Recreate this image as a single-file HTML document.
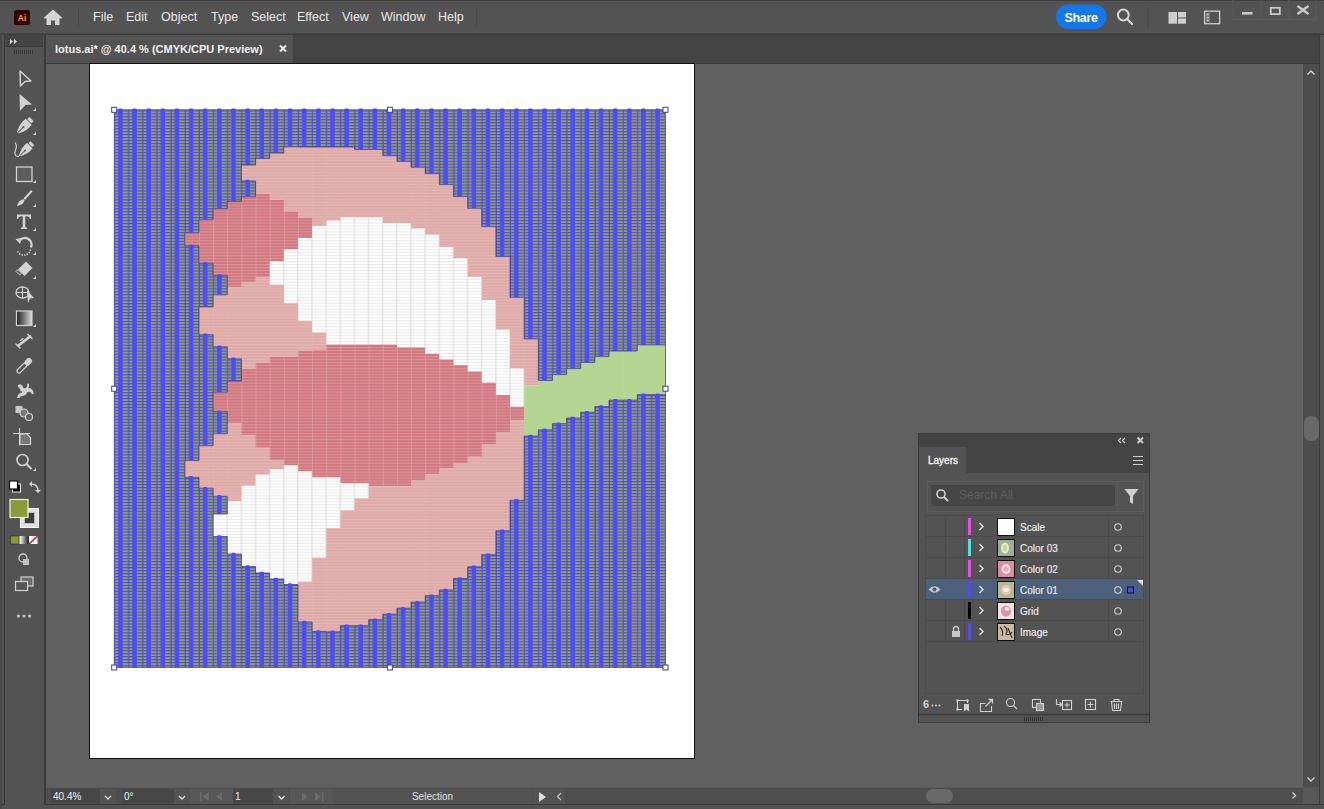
<!DOCTYPE html>
<html><head><meta charset="utf-8">
<style>
*{margin:0;padding:0;box-sizing:border-box}
html,body{width:1324px;height:809px;overflow:hidden;background:#535353;font-family:"Liberation Sans",sans-serif;}
.a{position:absolute}
#menubar{left:0;top:0;width:1324px;height:34px;background:#535353;border-top:1px solid #3d3d3d}
.menu{position:absolute;top:10px;font-size:12.5px;color:#e8e8e8;line-height:14px}
#tabbar{left:46px;top:34px;width:1274px;height:30px;background:#434343;border-top:1px solid #383838;border-bottom:1px solid #3a3a3a}
#tab{left:46px;top:34px;width:247px;height:30px;background:#535353;border-top:1px solid #383838;border-bottom:1px solid #3a3a3a}
#tabtxt{left:55px;top:42px;font-size:11px;font-weight:bold;color:#f0f0f0;line-height:14px}
#tabx{left:278px;top:42px;font-size:12px;font-weight:bold;color:#f0f0f0;line-height:14px}
#canvas{left:46px;top:64px;width:1257px;height:723px;background:#606060}
#artboard{left:89px;top:63px;width:606px;height:696px;background:#fff;border:1px solid #111}
#toolbar{left:4px;top:34px;width:42px;height:771px;background:#535353;border-left:1px solid #3a3a3a;border-right:2px solid #3a3a3a}
#tbhead{left:5px;top:34px;width:38px;height:13px;background:#454545;border-bottom:1px solid #3a3a3a}
#vscroll{left:1303px;top:64px;width:17px;height:723px;background:#4d4d4d;border-right:1px solid #444}
#vthumb{left:1304px;top:416px;width:15px;height:25px;background:#696969;border-radius:7px}
#status{left:46px;top:787px;width:1274px;height:17px;background:#4e4e4e;border-top:1px solid #5a5a5a}
#hthumb{left:926px;top:789px;width:27px;height:14px;background:#696969;border-radius:7px}
.fld{position:absolute;top:789px;height:15px;background:#474747;color:#f0f0f0;font-size:10px;line-height:16px;padding-left:2px}
.dd{position:absolute;top:789px;height:15px;width:16px;background:#535353}
#winborder{left:1320px;top:34px;width:4px;height:775px;background:#535353}
#botborder{left:0;top:804px;width:1324px;height:5px;background:#535353;border-top:1px solid #3a3a3a}
svg{position:absolute;left:0;top:0}
/* layers panel */
#panel{left:918px;top:433px;width:232px;height:290px;background:#535353;border:1px solid #3c3c3c}
#phead{left:919px;top:434px;width:230px;height:13px;background:#434343}
#ptabbar{left:919px;top:447px;width:230px;height:26px;background:#454545}
#ptab{left:919px;top:447px;width:47px;height:27px;background:#535353}
#ptabtxt{left:928px;top:454px;font-size:10px;color:#f8f8f8;line-height:13px;-webkit-text-stroke:0.3px #f8f8f8}
#search{left:931px;top:485px;width:184px;height:21px;background:#464646;border-radius:3px}
#searchtxt{left:959px;top:489px;font-size:12px;color:#5d5d5d;line-height:13px}
#list{left:925px;top:515px;width:219px;height:179px;border:1px solid #4c4c4c;background:#535353}
.row{position:absolute;left:926px;width:217px;height:21px;border-bottom:1px solid #4b4b4b}
.lname{position:absolute;left:1020px;font-size:10px;color:#eeeeee;line-height:13px;-webkit-text-stroke:0.15px #eee}
.bar{position:absolute;left:968px;width:3px;height:17px}
.thumb{position:absolute;left:997px;width:18px;height:18px;border:1px solid #111}
</style></head>
<body>
<div class="a" id="menubar"></div>
<div class="a" id="tabbar"></div>
<div class="a" id="tab"></div>
<div class="a" id="tabtxt">lotus.ai* @ 40.4 % (CMYK/CPU Preview)</div>
<div class="a" id="canvas"></div>
<div class="a" id="vscroll"></div>
<div class="a" id="vthumb"></div>
<div class="a" id="status"></div>
<div class="a" id="hthumb"></div>
<div class="a" id="winborder"></div>
<div class="a" style="left:1303px;top:787px;width:16px;height:17px;background:#585858"></div>
<div class="a" style="left:1319px;top:34px;width:1.3px;height:770px;background:#3c3c3c"></div>
<div class="a" style="left:1297px;top:64px;width:6px;height:723px;background:#626262"></div>
<div class="a" id="botborder"></div>
<div class="a" style="left:0;top:34px;width:1.5px;height:775px;background:#474747"></div>
<div class="a" id="toolbar"></div>
<div class="a" id="tbhead"></div>
<div class="a" id="artboard"></div>

<svg width="1324" height="809" viewBox="0 0 1324 809">
<defs>
<pattern id="pB" patternUnits="userSpaceOnUse" x="114.200" y="110.300" width="14.137" height="5.932">
<rect width="15" height="6" fill="#3c4072"/>
<rect x="0" y="1.15" width="15" height="2.1" fill="#9294d4"/>
<rect x="0" y="4.12" width="15" height="2.1" fill="#91a75e"/>
<rect x="0" y="0" width="15" height="0.28" fill="#91a75e"/>
<rect x="0" y="0" width="0.9" height="6" fill="#4a4ad0"/><rect x="13.9" y="0" width="0.3" height="6" fill="#4a4ad0"/>
<rect x="4.0" y="0" width="4.4" height="6" fill="#4b4bfd"/>
</pattern>
<pattern id="pP" patternUnits="userSpaceOnUse" x="114.200" y="109.800" width="14.137" height="2.966">
<rect width="15" height="3" fill="#dfaba9"/>
<rect x="0" y="0" width="15" height="0.7" fill="#e8bbb8"/>
</pattern>
<pattern id="pS" patternUnits="userSpaceOnUse" x="114.200" y="109.800" width="14.137" height="2.966">
<rect width="15" height="3" fill="#d27a82"/>
<rect x="0" y="0" width="15" height="0.7" fill="#e29da2"/>
<rect x="0" y="2.4" width="15" height="0.5" fill="#cc727a"/>
<rect x="0" y="0" width="0.6" height="3" fill="#e2a0a4"/>
</pattern>
<pattern id="pW" patternUnits="userSpaceOnUse" x="114.200" y="109.800" width="14.137" height="2.966">
<rect width="15" height="3" fill="#ffffff"/>
<rect x="0" y="0" width="15" height="0.8" fill="#e4e4e4"/>
<rect x="13.6" y="0" width="0.6" height="3" fill="#d4d4d4"/><rect x="0" y="0" width="0.3" height="3" fill="#d4d4d4"/>
</pattern>
</defs>
<rect x="114.20" y="109.80" width="14.737" height="557.70" fill="url(#pB)"/>
<rect x="128.34" y="109.80" width="14.737" height="557.70" fill="url(#pB)"/>
<rect x="142.47" y="109.80" width="14.737" height="557.70" fill="url(#pB)"/>
<rect x="156.61" y="109.80" width="14.737" height="557.70" fill="url(#pB)"/>
<rect x="170.75" y="109.80" width="14.737" height="557.70" fill="url(#pB)"/>
<rect x="184.88" y="109.80" width="14.737" height="122.90" fill="url(#pB)"/>
<rect x="184.88" y="232.70" width="14.737" height="13.00" fill="url(#pS)"/>
<rect x="184.88" y="245.70" width="14.737" height="214.80" fill="url(#pB)"/>
<rect x="184.88" y="460.50" width="14.737" height="16.80" fill="url(#pP)"/>
<rect x="184.88" y="477.30" width="14.737" height="190.20" fill="url(#pB)"/>
<rect x="199.02" y="109.80" width="14.737" height="109.90" fill="url(#pB)"/>
<rect x="199.02" y="219.70" width="14.737" height="43.60" fill="url(#pS)"/>
<rect x="199.02" y="263.30" width="14.737" height="43.60" fill="url(#pB)"/>
<rect x="199.02" y="306.90" width="14.737" height="27.80" fill="url(#pP)"/>
<rect x="199.02" y="334.70" width="14.737" height="111.00" fill="url(#pB)"/>
<rect x="199.02" y="445.70" width="14.737" height="42.50" fill="url(#pP)"/>
<rect x="199.02" y="488.20" width="14.737" height="179.30" fill="url(#pB)"/>
<rect x="213.16" y="109.80" width="14.737" height="98.80" fill="url(#pB)"/>
<rect x="213.16" y="208.60" width="14.737" height="66.80" fill="url(#pS)"/>
<rect x="213.16" y="275.40" width="14.737" height="19.40" fill="url(#pB)"/>
<rect x="213.16" y="294.80" width="14.737" height="52.00" fill="url(#pP)"/>
<rect x="213.16" y="346.80" width="14.737" height="45.40" fill="url(#pB)"/>
<rect x="213.16" y="392.20" width="14.737" height="19.40" fill="url(#pS)"/>
<rect x="213.16" y="411.60" width="14.737" height="22.10" fill="url(#pB)"/>
<rect x="213.16" y="433.70" width="14.737" height="62.60" fill="url(#pP)"/>
<rect x="213.16" y="496.30" width="14.737" height="17.70" fill="url(#pB)"/>
<rect x="213.16" y="514.00" width="14.737" height="22.50" fill="url(#pW)"/>
<rect x="213.16" y="536.50" width="14.737" height="131.00" fill="url(#pB)"/>
<rect x="227.30" y="109.80" width="14.737" height="91.70" fill="url(#pB)"/>
<rect x="227.30" y="201.50" width="14.737" height="85.90" fill="url(#pS)"/>
<rect x="227.30" y="287.40" width="14.737" height="71.40" fill="url(#pP)"/>
<rect x="227.30" y="358.80" width="14.737" height="22.20" fill="url(#pB)"/>
<rect x="227.30" y="381.00" width="14.737" height="42.60" fill="url(#pS)"/>
<rect x="227.30" y="423.60" width="14.737" height="77.40" fill="url(#pP)"/>
<rect x="227.30" y="501.00" width="14.737" height="53.00" fill="url(#pW)"/>
<rect x="227.30" y="554.00" width="14.737" height="113.50" fill="url(#pB)"/>
<rect x="241.43" y="109.80" width="14.737" height="55.20" fill="url(#pB)"/>
<rect x="241.43" y="165.00" width="14.737" height="16.00" fill="url(#pP)"/>
<rect x="241.43" y="181.00" width="14.737" height="15.60" fill="url(#pB)"/>
<rect x="241.43" y="196.60" width="14.737" height="85.30" fill="url(#pS)"/>
<rect x="241.43" y="281.90" width="14.737" height="87.10" fill="url(#pP)"/>
<rect x="241.43" y="369.00" width="14.737" height="66.50" fill="url(#pS)"/>
<rect x="241.43" y="435.50" width="14.737" height="50.30" fill="url(#pP)"/>
<rect x="241.43" y="485.80" width="14.737" height="80.70" fill="url(#pW)"/>
<rect x="241.43" y="566.50" width="14.737" height="101.00" fill="url(#pB)"/>
<rect x="255.57" y="109.80" width="14.737" height="48.70" fill="url(#pB)"/>
<rect x="255.57" y="158.50" width="14.737" height="35.30" fill="url(#pP)"/>
<rect x="255.57" y="193.80" width="14.737" height="83.40" fill="url(#pS)"/>
<rect x="255.57" y="277.20" width="14.737" height="85.30" fill="url(#pP)"/>
<rect x="255.57" y="362.50" width="14.737" height="85.30" fill="url(#pS)"/>
<rect x="255.57" y="447.80" width="14.737" height="26.90" fill="url(#pP)"/>
<rect x="255.57" y="474.70" width="14.737" height="98.30" fill="url(#pW)"/>
<rect x="255.57" y="573.00" width="14.737" height="94.50" fill="url(#pB)"/>
<rect x="269.71" y="109.80" width="14.737" height="43.20" fill="url(#pB)"/>
<rect x="269.71" y="153.00" width="14.737" height="46.70" fill="url(#pP)"/>
<rect x="269.71" y="199.70" width="14.737" height="61.80" fill="url(#pS)"/>
<rect x="269.71" y="261.50" width="14.737" height="23.10" fill="url(#pW)"/>
<rect x="269.71" y="284.60" width="14.737" height="72.40" fill="url(#pP)"/>
<rect x="269.71" y="357.00" width="14.737" height="102.90" fill="url(#pS)"/>
<rect x="269.71" y="459.90" width="14.737" height="9.20" fill="url(#pP)"/>
<rect x="269.71" y="469.10" width="14.737" height="109.90" fill="url(#pW)"/>
<rect x="269.71" y="579.00" width="14.737" height="88.50" fill="url(#pB)"/>
<rect x="283.84" y="109.80" width="14.737" height="37.00" fill="url(#pB)"/>
<rect x="283.84" y="146.80" width="14.737" height="64.60" fill="url(#pP)"/>
<rect x="283.84" y="211.40" width="14.737" height="38.00" fill="url(#pS)"/>
<rect x="283.84" y="249.40" width="14.737" height="53.80" fill="url(#pW)"/>
<rect x="283.84" y="303.20" width="14.737" height="53.80" fill="url(#pP)"/>
<rect x="283.84" y="357.00" width="14.737" height="108.40" fill="url(#pS)"/>
<rect x="283.84" y="465.40" width="14.737" height="119.10" fill="url(#pW)"/>
<rect x="283.84" y="584.50" width="14.737" height="83.00" fill="url(#pB)"/>
<rect x="297.98" y="109.80" width="14.737" height="37.20" fill="url(#pB)"/>
<rect x="297.98" y="147.00" width="14.737" height="70.50" fill="url(#pP)"/>
<rect x="297.98" y="217.50" width="14.737" height="20.50" fill="url(#pS)"/>
<rect x="297.98" y="238.00" width="14.737" height="82.70" fill="url(#pW)"/>
<rect x="297.98" y="320.70" width="14.737" height="29.80" fill="url(#pP)"/>
<rect x="297.98" y="350.50" width="14.737" height="120.90" fill="url(#pS)"/>
<rect x="297.98" y="471.40" width="14.737" height="110.30" fill="url(#pW)"/>
<rect x="297.98" y="581.70" width="14.737" height="40.30" fill="url(#pP)"/>
<rect x="297.98" y="622.00" width="14.737" height="45.50" fill="url(#pB)"/>
<rect x="312.12" y="109.80" width="14.737" height="37.20" fill="url(#pB)"/>
<rect x="312.12" y="147.00" width="14.737" height="79.20" fill="url(#pP)"/>
<rect x="312.12" y="226.20" width="14.737" height="106.30" fill="url(#pW)"/>
<rect x="312.12" y="332.50" width="14.737" height="17.60" fill="url(#pP)"/>
<rect x="312.12" y="350.10" width="14.737" height="127.40" fill="url(#pS)"/>
<rect x="312.12" y="477.50" width="14.737" height="80.10" fill="url(#pW)"/>
<rect x="312.12" y="557.60" width="14.737" height="73.90" fill="url(#pP)"/>
<rect x="312.12" y="631.50" width="14.737" height="36.00" fill="url(#pB)"/>
<rect x="326.25" y="109.80" width="14.737" height="37.20" fill="url(#pB)"/>
<rect x="326.25" y="147.00" width="14.737" height="73.70" fill="url(#pP)"/>
<rect x="326.25" y="220.70" width="14.737" height="123.90" fill="url(#pW)"/>
<rect x="326.25" y="344.60" width="14.737" height="132.90" fill="url(#pS)"/>
<rect x="326.25" y="477.50" width="14.737" height="50.50" fill="url(#pW)"/>
<rect x="326.25" y="528.00" width="14.737" height="103.80" fill="url(#pP)"/>
<rect x="326.25" y="631.80" width="14.737" height="35.70" fill="url(#pB)"/>
<rect x="340.39" y="109.80" width="14.737" height="37.20" fill="url(#pB)"/>
<rect x="340.39" y="147.00" width="14.737" height="70.50" fill="url(#pP)"/>
<rect x="340.39" y="217.50" width="14.737" height="127.10" fill="url(#pW)"/>
<rect x="340.39" y="344.60" width="14.737" height="138.80" fill="url(#pS)"/>
<rect x="340.39" y="483.40" width="14.737" height="26.90" fill="url(#pW)"/>
<rect x="340.39" y="510.30" width="14.737" height="115.40" fill="url(#pP)"/>
<rect x="340.39" y="625.70" width="14.737" height="41.80" fill="url(#pB)"/>
<rect x="354.53" y="109.80" width="14.737" height="39.70" fill="url(#pB)"/>
<rect x="354.53" y="149.50" width="14.737" height="68.00" fill="url(#pP)"/>
<rect x="354.53" y="217.50" width="14.737" height="127.10" fill="url(#pW)"/>
<rect x="354.53" y="344.60" width="14.737" height="138.80" fill="url(#pS)"/>
<rect x="354.53" y="483.40" width="14.737" height="14.90" fill="url(#pW)"/>
<rect x="354.53" y="498.30" width="14.737" height="127.40" fill="url(#pP)"/>
<rect x="354.53" y="625.70" width="14.737" height="41.80" fill="url(#pB)"/>
<rect x="368.67" y="109.80" width="14.737" height="39.70" fill="url(#pB)"/>
<rect x="368.67" y="149.50" width="14.737" height="68.00" fill="url(#pP)"/>
<rect x="368.67" y="217.50" width="14.737" height="127.10" fill="url(#pW)"/>
<rect x="368.67" y="344.60" width="14.737" height="141.60" fill="url(#pS)"/>
<rect x="368.67" y="486.20" width="14.737" height="133.50" fill="url(#pP)"/>
<rect x="368.67" y="619.70" width="14.737" height="47.80" fill="url(#pB)"/>
<rect x="382.80" y="109.80" width="14.737" height="45.90" fill="url(#pB)"/>
<rect x="382.80" y="155.70" width="14.737" height="67.30" fill="url(#pP)"/>
<rect x="382.80" y="223.00" width="14.737" height="121.60" fill="url(#pW)"/>
<rect x="382.80" y="344.60" width="14.737" height="141.60" fill="url(#pS)"/>
<rect x="382.80" y="486.20" width="14.737" height="128.00" fill="url(#pP)"/>
<rect x="382.80" y="614.20" width="14.737" height="53.30" fill="url(#pB)"/>
<rect x="396.94" y="109.80" width="14.737" height="51.60" fill="url(#pB)"/>
<rect x="396.94" y="161.40" width="14.737" height="61.60" fill="url(#pP)"/>
<rect x="396.94" y="223.00" width="14.737" height="124.30" fill="url(#pW)"/>
<rect x="396.94" y="347.30" width="14.737" height="138.90" fill="url(#pS)"/>
<rect x="396.94" y="486.20" width="14.737" height="122.00" fill="url(#pP)"/>
<rect x="396.94" y="608.20" width="14.737" height="59.30" fill="url(#pB)"/>
<rect x="411.08" y="109.80" width="14.737" height="57.50" fill="url(#pB)"/>
<rect x="411.08" y="167.30" width="14.737" height="61.30" fill="url(#pP)"/>
<rect x="411.08" y="228.60" width="14.737" height="118.70" fill="url(#pW)"/>
<rect x="411.08" y="347.30" width="14.737" height="133.40" fill="url(#pS)"/>
<rect x="411.08" y="480.70" width="14.737" height="121.40" fill="url(#pP)"/>
<rect x="411.08" y="602.10" width="14.737" height="65.40" fill="url(#pB)"/>
<rect x="425.21" y="109.80" width="14.737" height="63.90" fill="url(#pB)"/>
<rect x="425.21" y="173.70" width="14.737" height="61.10" fill="url(#pP)"/>
<rect x="425.21" y="234.80" width="14.737" height="119.00" fill="url(#pW)"/>
<rect x="425.21" y="353.80" width="14.737" height="120.40" fill="url(#pS)"/>
<rect x="425.21" y="474.20" width="14.737" height="121.40" fill="url(#pP)"/>
<rect x="425.21" y="595.60" width="14.737" height="71.90" fill="url(#pB)"/>
<rect x="439.35" y="109.80" width="14.737" height="74.80" fill="url(#pB)"/>
<rect x="439.35" y="184.60" width="14.737" height="62.40" fill="url(#pP)"/>
<rect x="439.35" y="247.00" width="14.737" height="112.40" fill="url(#pW)"/>
<rect x="439.35" y="359.40" width="14.737" height="109.20" fill="url(#pS)"/>
<rect x="439.35" y="468.60" width="14.737" height="121.40" fill="url(#pP)"/>
<rect x="439.35" y="590.00" width="14.737" height="77.50" fill="url(#pB)"/>
<rect x="453.49" y="109.80" width="14.737" height="86.70" fill="url(#pB)"/>
<rect x="453.49" y="196.50" width="14.737" height="62.00" fill="url(#pP)"/>
<rect x="453.49" y="258.50" width="14.737" height="106.50" fill="url(#pW)"/>
<rect x="453.49" y="365.00" width="14.737" height="98.00" fill="url(#pS)"/>
<rect x="453.49" y="463.00" width="14.737" height="115.50" fill="url(#pP)"/>
<rect x="453.49" y="578.50" width="14.737" height="89.00" fill="url(#pB)"/>
<rect x="467.62" y="109.80" width="14.737" height="98.50" fill="url(#pB)"/>
<rect x="467.62" y="208.30" width="14.737" height="68.60" fill="url(#pP)"/>
<rect x="467.62" y="276.90" width="14.737" height="94.60" fill="url(#pW)"/>
<rect x="467.62" y="371.50" width="14.737" height="85.30" fill="url(#pS)"/>
<rect x="467.62" y="456.80" width="14.737" height="110.00" fill="url(#pP)"/>
<rect x="467.62" y="566.80" width="14.737" height="100.70" fill="url(#pB)"/>
<rect x="481.76" y="109.80" width="14.737" height="116.80" fill="url(#pB)"/>
<rect x="481.76" y="226.60" width="14.737" height="73.40" fill="url(#pP)"/>
<rect x="481.76" y="300.00" width="14.737" height="82.60" fill="url(#pW)"/>
<rect x="481.76" y="382.60" width="14.737" height="62.10" fill="url(#pS)"/>
<rect x="481.76" y="444.70" width="14.737" height="110.00" fill="url(#pP)"/>
<rect x="481.76" y="554.70" width="14.737" height="112.80" fill="url(#pB)"/>
<rect x="495.90" y="109.80" width="14.737" height="146.70" fill="url(#pB)"/>
<rect x="495.90" y="256.50" width="14.737" height="73.20" fill="url(#pP)"/>
<rect x="495.90" y="329.70" width="14.737" height="65.30" fill="url(#pW)"/>
<rect x="495.90" y="395.00" width="14.737" height="37.60" fill="url(#pS)"/>
<rect x="495.90" y="432.60" width="14.737" height="98.20" fill="url(#pP)"/>
<rect x="495.90" y="530.80" width="14.737" height="136.70" fill="url(#pB)"/>
<rect x="510.04" y="109.80" width="14.737" height="187.50" fill="url(#pB)"/>
<rect x="510.04" y="297.30" width="14.737" height="71.30" fill="url(#pP)"/>
<rect x="510.04" y="368.60" width="14.737" height="38.10" fill="url(#pW)"/>
<rect x="510.04" y="406.70" width="14.737" height="13.90" fill="url(#pS)"/>
<rect x="510.04" y="420.60" width="14.737" height="79.70" fill="url(#pP)"/>
<rect x="510.04" y="500.30" width="14.737" height="167.20" fill="url(#pB)"/>
<rect x="524.17" y="109.80" width="14.737" height="229.10" fill="url(#pB)"/>
<rect x="524.17" y="338.90" width="14.737" height="46.40" fill="url(#pP)"/>
<rect x="524.17" y="385.30" width="14.737" height="50.70" fill="#b4d692"/>
<rect x="524.17" y="436.00" width="14.737" height="231.50" fill="url(#pB)"/>
<rect x="538.31" y="109.80" width="14.737" height="270.70" fill="url(#pB)"/>
<rect x="538.31" y="380.50" width="14.737" height="49.30" fill="#b4d692"/>
<rect x="538.31" y="429.80" width="14.737" height="237.70" fill="url(#pB)"/>
<rect x="552.45" y="109.80" width="14.737" height="264.80" fill="url(#pB)"/>
<rect x="552.45" y="374.60" width="14.737" height="49.00" fill="#b4d692"/>
<rect x="552.45" y="423.60" width="14.737" height="243.90" fill="url(#pB)"/>
<rect x="566.58" y="109.80" width="14.737" height="258.80" fill="url(#pB)"/>
<rect x="566.58" y="368.60" width="14.737" height="49.40" fill="#b4d692"/>
<rect x="566.58" y="418.00" width="14.737" height="249.50" fill="url(#pB)"/>
<rect x="580.72" y="109.80" width="14.737" height="252.70" fill="url(#pB)"/>
<rect x="580.72" y="362.50" width="14.737" height="49.70" fill="#b4d692"/>
<rect x="580.72" y="412.20" width="14.737" height="255.30" fill="url(#pB)"/>
<rect x="594.86" y="109.80" width="14.737" height="246.80" fill="url(#pB)"/>
<rect x="594.86" y="356.60" width="14.737" height="49.90" fill="#b4d692"/>
<rect x="594.86" y="406.50" width="14.737" height="261.00" fill="url(#pB)"/>
<rect x="609.00" y="109.80" width="14.737" height="241.20" fill="url(#pB)"/>
<rect x="609.00" y="351.00" width="14.737" height="49.10" fill="#b4d692"/>
<rect x="609.00" y="400.10" width="14.737" height="267.40" fill="url(#pB)"/>
<rect x="623.13" y="109.80" width="14.737" height="241.20" fill="url(#pB)"/>
<rect x="623.13" y="351.00" width="14.737" height="49.10" fill="#b4d692"/>
<rect x="623.13" y="400.10" width="14.737" height="267.40" fill="url(#pB)"/>
<rect x="637.27" y="109.80" width="14.737" height="235.10" fill="url(#pB)"/>
<rect x="637.27" y="344.90" width="14.737" height="49.70" fill="#b4d692"/>
<rect x="637.27" y="394.60" width="14.737" height="272.90" fill="url(#pB)"/>
<rect x="651.41" y="109.80" width="14.137" height="235.10" fill="url(#pB)"/>
<rect x="651.41" y="344.90" width="14.137" height="49.70" fill="#b4d692"/>
<rect x="651.41" y="394.60" width="14.137" height="272.90" fill="url(#pB)"/>
<path d="M184.88 232.70V245.70M184.88 460.50V477.30M184.88 232.70H199.02M199.02 219.70V232.70M184.88 245.70H199.02M184.88 460.50H199.02M199.02 245.70V263.30M199.02 306.90V334.70M199.02 445.70V460.50M184.88 477.30H199.02M199.02 477.30V488.20M199.02 219.70H213.16M213.16 208.60V219.70M199.02 263.30H213.16M199.02 306.90H213.16M213.16 263.30V275.40M213.16 294.80V306.90M199.02 334.70H213.16M199.02 445.70H213.16M213.16 334.70V346.80M213.16 392.20V411.60M213.16 433.70V445.70M199.02 488.20H213.16M213.16 488.20V496.30M213.16 514.00V536.50M213.16 208.60H227.30M227.30 201.50V208.60M213.16 275.40H227.30M213.16 294.80H227.30M227.30 275.40V294.80M213.16 346.80H227.30M213.16 392.20H227.30M227.30 346.80V358.80M227.30 381.00V392.20M213.16 411.60H227.30M213.16 433.70H227.30M227.30 411.60V433.70M213.16 496.30H227.30M213.16 514.00H227.30M227.30 496.30V514.00M213.16 536.50H227.30M227.30 536.50V554.00M227.30 201.50H241.43M241.43 165.00V181.00M241.43 196.60V201.50M227.30 358.80H241.43M227.30 381.00H241.43M241.43 358.80V381.00M227.30 554.00H241.43M241.43 554.00V566.50M241.43 165.00H255.57M255.57 158.50V165.00M241.43 181.00H255.57M241.43 196.60H255.57M255.57 181.00V196.60M241.43 566.50H255.57M255.57 566.50V573.00M255.57 158.50H269.71M269.71 153.00V158.50M255.57 573.00H269.71M269.71 573.00V579.00M269.71 153.00H283.84M283.84 146.80V153.00M269.71 579.00H283.84M283.84 579.00V584.50M283.84 146.80H297.98M283.84 584.50H297.98M297.98 584.50V622.00M297.98 147.00H312.12M297.98 622.00H312.12M312.12 622.00V631.50M312.12 147.00H326.25M312.12 631.50H326.25M326.25 147.00H340.39M326.25 631.80H340.39M340.39 147.00H354.53M340.39 625.70H354.53M340.39 625.70V631.80M354.53 149.50H368.67M354.53 147.00V149.50M354.53 625.70H368.67M368.67 149.50H382.80M368.67 619.70H382.80M368.67 619.70V625.70M382.80 155.70H396.94M382.80 149.50V155.70M382.80 614.20H396.94M382.80 614.20V619.70M396.94 161.40H411.08M396.94 155.70V161.40M396.94 608.20H411.08M396.94 608.20V614.20M411.08 167.30H425.21M411.08 161.40V167.30M411.08 602.10H425.21M411.08 602.10V608.20M425.21 173.70H439.35M425.21 167.30V173.70M425.21 595.60H439.35M425.21 595.60V602.10M439.35 184.60H453.49M439.35 173.70V184.60M439.35 590.00H453.49M439.35 590.00V595.60M453.49 196.50H467.62M453.49 184.60V196.50M453.49 578.50H467.62M453.49 578.50V590.00M467.62 208.30H481.76M467.62 196.50V208.30M467.62 566.80H481.76M467.62 566.80V578.50M481.76 226.60H495.90M481.76 208.30V226.60M481.76 554.70H495.90M481.76 554.70V566.80M495.90 256.50H510.04M495.90 226.60V256.50M495.90 530.80H510.04M495.90 530.80V554.70M510.04 297.30H524.17M510.04 256.50V297.30M510.04 500.30H524.17M510.04 500.30V530.80M524.17 338.90H538.31M524.17 297.30V338.90M524.17 436.00H538.31M524.17 436.00V500.30M538.31 380.50H552.45M538.31 338.90V380.50M552.45 374.60V380.50M538.31 429.80H552.45M538.31 429.80V436.00M552.45 374.60H566.58M566.58 368.60V374.60M552.45 423.60H566.58M552.45 423.60V429.80M566.58 368.60H580.72M580.72 362.50V368.60M566.58 418.00H580.72M566.58 418.00V423.60M580.72 362.50H594.86M594.86 356.60V362.50M580.72 412.20H594.86M580.72 412.20V418.00M594.86 356.60H609.00M609.00 351.00V356.60M594.86 406.50H609.00M594.86 406.50V412.20M609.00 351.00H623.13M609.00 400.10H623.13M609.00 400.10V406.50M623.13 351.00H637.27M637.27 344.90V351.00M623.13 400.10H637.27M637.27 344.90H651.41M637.27 394.60H651.41M637.27 394.60V400.10M651.41 344.90H665.54M651.41 394.60H665.54" fill="none" stroke="#3c3c86" stroke-width="0.75"/>
<rect x="118.20" y="108.60" width="4.4" height="3.2" rx="1.3" fill="#4b4bfd"/>
<rect x="118.30" y="110.20" width="4.2" height="3" fill="#4b4bfd"/>
<rect x="132.34" y="108.60" width="4.4" height="3.2" rx="1.3" fill="#4b4bfd"/>
<rect x="132.44" y="110.20" width="4.2" height="3" fill="#4b4bfd"/>
<rect x="146.47" y="108.60" width="4.4" height="3.2" rx="1.3" fill="#4b4bfd"/>
<rect x="146.57" y="110.20" width="4.2" height="3" fill="#4b4bfd"/>
<rect x="160.61" y="108.60" width="4.4" height="3.2" rx="1.3" fill="#4b4bfd"/>
<rect x="160.71" y="110.20" width="4.2" height="3" fill="#4b4bfd"/>
<rect x="174.75" y="108.60" width="4.4" height="3.2" rx="1.3" fill="#4b4bfd"/>
<rect x="174.85" y="110.20" width="4.2" height="3" fill="#4b4bfd"/>
<rect x="188.88" y="108.60" width="4.4" height="3.2" rx="1.3" fill="#4b4bfd"/>
<rect x="188.98" y="110.20" width="4.2" height="3" fill="#4b4bfd"/>
<rect x="188.88" y="244.50" width="4.4" height="3.2" rx="1.3" fill="#4b4bfd"/>
<rect x="188.98" y="246.10" width="4.2" height="3" fill="#4b4bfd"/>
<rect x="188.88" y="476.10" width="4.4" height="3.2" rx="1.3" fill="#4b4bfd"/>
<rect x="188.98" y="477.70" width="4.2" height="3" fill="#4b4bfd"/>
<rect x="203.02" y="108.60" width="4.4" height="3.2" rx="1.3" fill="#4b4bfd"/>
<rect x="203.12" y="110.20" width="4.2" height="3" fill="#4b4bfd"/>
<rect x="203.02" y="262.10" width="4.4" height="3.2" rx="1.3" fill="#4b4bfd"/>
<rect x="203.12" y="263.70" width="4.2" height="3" fill="#4b4bfd"/>
<rect x="203.02" y="333.50" width="4.4" height="3.2" rx="1.3" fill="#4b4bfd"/>
<rect x="203.12" y="335.10" width="4.2" height="3" fill="#4b4bfd"/>
<rect x="203.02" y="487.00" width="4.4" height="3.2" rx="1.3" fill="#4b4bfd"/>
<rect x="203.12" y="488.60" width="4.2" height="3" fill="#4b4bfd"/>
<rect x="217.16" y="108.60" width="4.4" height="3.2" rx="1.3" fill="#4b4bfd"/>
<rect x="217.26" y="110.20" width="4.2" height="3" fill="#4b4bfd"/>
<rect x="217.16" y="274.20" width="4.4" height="3.2" rx="1.3" fill="#4b4bfd"/>
<rect x="217.26" y="275.80" width="4.2" height="3" fill="#4b4bfd"/>
<rect x="217.16" y="345.60" width="4.4" height="3.2" rx="1.3" fill="#4b4bfd"/>
<rect x="217.26" y="347.20" width="4.2" height="3" fill="#4b4bfd"/>
<rect x="217.16" y="410.40" width="4.4" height="3.2" rx="1.3" fill="#4b4bfd"/>
<rect x="217.26" y="412.00" width="4.2" height="3" fill="#4b4bfd"/>
<rect x="217.16" y="495.10" width="4.4" height="3.2" rx="1.3" fill="#4b4bfd"/>
<rect x="217.26" y="496.70" width="4.2" height="3" fill="#4b4bfd"/>
<rect x="217.16" y="535.30" width="4.4" height="3.2" rx="1.3" fill="#4b4bfd"/>
<rect x="217.26" y="536.90" width="4.2" height="3" fill="#4b4bfd"/>
<rect x="231.30" y="108.60" width="4.4" height="3.2" rx="1.3" fill="#4b4bfd"/>
<rect x="231.40" y="110.20" width="4.2" height="3" fill="#4b4bfd"/>
<rect x="231.30" y="357.60" width="4.4" height="3.2" rx="1.3" fill="#4b4bfd"/>
<rect x="231.40" y="359.20" width="4.2" height="3" fill="#4b4bfd"/>
<rect x="231.30" y="552.80" width="4.4" height="3.2" rx="1.3" fill="#4b4bfd"/>
<rect x="231.40" y="554.40" width="4.2" height="3" fill="#4b4bfd"/>
<rect x="245.43" y="108.60" width="4.4" height="3.2" rx="1.3" fill="#4b4bfd"/>
<rect x="245.53" y="110.20" width="4.2" height="3" fill="#4b4bfd"/>
<rect x="245.43" y="179.80" width="4.4" height="3.2" rx="1.3" fill="#4b4bfd"/>
<rect x="245.53" y="181.40" width="4.2" height="3" fill="#4b4bfd"/>
<rect x="245.43" y="565.30" width="4.4" height="3.2" rx="1.3" fill="#4b4bfd"/>
<rect x="245.53" y="566.90" width="4.2" height="3" fill="#4b4bfd"/>
<rect x="259.57" y="108.60" width="4.4" height="3.2" rx="1.3" fill="#4b4bfd"/>
<rect x="259.67" y="110.20" width="4.2" height="3" fill="#4b4bfd"/>
<rect x="259.57" y="571.80" width="4.4" height="3.2" rx="1.3" fill="#4b4bfd"/>
<rect x="259.67" y="573.40" width="4.2" height="3" fill="#4b4bfd"/>
<rect x="273.71" y="108.60" width="4.4" height="3.2" rx="1.3" fill="#4b4bfd"/>
<rect x="273.81" y="110.20" width="4.2" height="3" fill="#4b4bfd"/>
<rect x="273.71" y="577.80" width="4.4" height="3.2" rx="1.3" fill="#4b4bfd"/>
<rect x="273.81" y="579.40" width="4.2" height="3" fill="#4b4bfd"/>
<rect x="287.84" y="108.60" width="4.4" height="3.2" rx="1.3" fill="#4b4bfd"/>
<rect x="287.94" y="110.20" width="4.2" height="3" fill="#4b4bfd"/>
<rect x="287.84" y="583.30" width="4.4" height="3.2" rx="1.3" fill="#4b4bfd"/>
<rect x="287.94" y="584.90" width="4.2" height="3" fill="#4b4bfd"/>
<rect x="301.98" y="108.60" width="4.4" height="3.2" rx="1.3" fill="#4b4bfd"/>
<rect x="302.08" y="110.20" width="4.2" height="3" fill="#4b4bfd"/>
<rect x="301.98" y="620.80" width="4.4" height="3.2" rx="1.3" fill="#4b4bfd"/>
<rect x="302.08" y="622.40" width="4.2" height="3" fill="#4b4bfd"/>
<rect x="316.12" y="108.60" width="4.4" height="3.2" rx="1.3" fill="#4b4bfd"/>
<rect x="316.22" y="110.20" width="4.2" height="3" fill="#4b4bfd"/>
<rect x="316.12" y="630.30" width="4.4" height="3.2" rx="1.3" fill="#4b4bfd"/>
<rect x="316.22" y="631.90" width="4.2" height="3" fill="#4b4bfd"/>
<rect x="330.25" y="108.60" width="4.4" height="3.2" rx="1.3" fill="#4b4bfd"/>
<rect x="330.36" y="110.20" width="4.2" height="3" fill="#4b4bfd"/>
<rect x="330.25" y="630.60" width="4.4" height="3.2" rx="1.3" fill="#4b4bfd"/>
<rect x="330.36" y="632.20" width="4.2" height="3" fill="#4b4bfd"/>
<rect x="344.39" y="108.60" width="4.4" height="3.2" rx="1.3" fill="#4b4bfd"/>
<rect x="344.49" y="110.20" width="4.2" height="3" fill="#4b4bfd"/>
<rect x="344.39" y="624.50" width="4.4" height="3.2" rx="1.3" fill="#4b4bfd"/>
<rect x="344.49" y="626.10" width="4.2" height="3" fill="#4b4bfd"/>
<rect x="358.53" y="108.60" width="4.4" height="3.2" rx="1.3" fill="#4b4bfd"/>
<rect x="358.63" y="110.20" width="4.2" height="3" fill="#4b4bfd"/>
<rect x="358.53" y="624.50" width="4.4" height="3.2" rx="1.3" fill="#4b4bfd"/>
<rect x="358.63" y="626.10" width="4.2" height="3" fill="#4b4bfd"/>
<rect x="372.67" y="108.60" width="4.4" height="3.2" rx="1.3" fill="#4b4bfd"/>
<rect x="372.77" y="110.20" width="4.2" height="3" fill="#4b4bfd"/>
<rect x="372.67" y="618.50" width="4.4" height="3.2" rx="1.3" fill="#4b4bfd"/>
<rect x="372.77" y="620.10" width="4.2" height="3" fill="#4b4bfd"/>
<rect x="386.80" y="108.60" width="4.4" height="3.2" rx="1.3" fill="#4b4bfd"/>
<rect x="386.90" y="110.20" width="4.2" height="3" fill="#4b4bfd"/>
<rect x="386.80" y="613.00" width="4.4" height="3.2" rx="1.3" fill="#4b4bfd"/>
<rect x="386.90" y="614.60" width="4.2" height="3" fill="#4b4bfd"/>
<rect x="400.94" y="108.60" width="4.4" height="3.2" rx="1.3" fill="#4b4bfd"/>
<rect x="401.04" y="110.20" width="4.2" height="3" fill="#4b4bfd"/>
<rect x="400.94" y="607.00" width="4.4" height="3.2" rx="1.3" fill="#4b4bfd"/>
<rect x="401.04" y="608.60" width="4.2" height="3" fill="#4b4bfd"/>
<rect x="415.08" y="108.60" width="4.4" height="3.2" rx="1.3" fill="#4b4bfd"/>
<rect x="415.18" y="110.20" width="4.2" height="3" fill="#4b4bfd"/>
<rect x="415.08" y="600.90" width="4.4" height="3.2" rx="1.3" fill="#4b4bfd"/>
<rect x="415.18" y="602.50" width="4.2" height="3" fill="#4b4bfd"/>
<rect x="429.21" y="108.60" width="4.4" height="3.2" rx="1.3" fill="#4b4bfd"/>
<rect x="429.31" y="110.20" width="4.2" height="3" fill="#4b4bfd"/>
<rect x="429.21" y="594.40" width="4.4" height="3.2" rx="1.3" fill="#4b4bfd"/>
<rect x="429.31" y="596.00" width="4.2" height="3" fill="#4b4bfd"/>
<rect x="443.35" y="108.60" width="4.4" height="3.2" rx="1.3" fill="#4b4bfd"/>
<rect x="443.45" y="110.20" width="4.2" height="3" fill="#4b4bfd"/>
<rect x="443.35" y="588.80" width="4.4" height="3.2" rx="1.3" fill="#4b4bfd"/>
<rect x="443.45" y="590.40" width="4.2" height="3" fill="#4b4bfd"/>
<rect x="457.49" y="108.60" width="4.4" height="3.2" rx="1.3" fill="#4b4bfd"/>
<rect x="457.59" y="110.20" width="4.2" height="3" fill="#4b4bfd"/>
<rect x="457.49" y="577.30" width="4.4" height="3.2" rx="1.3" fill="#4b4bfd"/>
<rect x="457.59" y="578.90" width="4.2" height="3" fill="#4b4bfd"/>
<rect x="471.62" y="108.60" width="4.4" height="3.2" rx="1.3" fill="#4b4bfd"/>
<rect x="471.73" y="110.20" width="4.2" height="3" fill="#4b4bfd"/>
<rect x="471.62" y="565.60" width="4.4" height="3.2" rx="1.3" fill="#4b4bfd"/>
<rect x="471.73" y="567.20" width="4.2" height="3" fill="#4b4bfd"/>
<rect x="485.76" y="108.60" width="4.4" height="3.2" rx="1.3" fill="#4b4bfd"/>
<rect x="485.86" y="110.20" width="4.2" height="3" fill="#4b4bfd"/>
<rect x="485.76" y="553.50" width="4.4" height="3.2" rx="1.3" fill="#4b4bfd"/>
<rect x="485.86" y="555.10" width="4.2" height="3" fill="#4b4bfd"/>
<rect x="499.90" y="108.60" width="4.4" height="3.2" rx="1.3" fill="#4b4bfd"/>
<rect x="500.00" y="110.20" width="4.2" height="3" fill="#4b4bfd"/>
<rect x="499.90" y="529.60" width="4.4" height="3.2" rx="1.3" fill="#4b4bfd"/>
<rect x="500.00" y="531.20" width="4.2" height="3" fill="#4b4bfd"/>
<rect x="514.04" y="108.60" width="4.4" height="3.2" rx="1.3" fill="#4b4bfd"/>
<rect x="514.14" y="110.20" width="4.2" height="3" fill="#4b4bfd"/>
<rect x="514.04" y="499.10" width="4.4" height="3.2" rx="1.3" fill="#4b4bfd"/>
<rect x="514.14" y="500.70" width="4.2" height="3" fill="#4b4bfd"/>
<rect x="528.17" y="108.60" width="4.4" height="3.2" rx="1.3" fill="#4b4bfd"/>
<rect x="528.27" y="110.20" width="4.2" height="3" fill="#4b4bfd"/>
<rect x="528.17" y="434.80" width="4.4" height="3.2" rx="1.3" fill="#4b4bfd"/>
<rect x="528.27" y="436.40" width="4.2" height="3" fill="#4b4bfd"/>
<rect x="542.31" y="108.60" width="4.4" height="3.2" rx="1.3" fill="#4b4bfd"/>
<rect x="542.41" y="110.20" width="4.2" height="3" fill="#4b4bfd"/>
<rect x="542.31" y="428.60" width="4.4" height="3.2" rx="1.3" fill="#4b4bfd"/>
<rect x="542.41" y="430.20" width="4.2" height="3" fill="#4b4bfd"/>
<rect x="556.45" y="108.60" width="4.4" height="3.2" rx="1.3" fill="#4b4bfd"/>
<rect x="556.55" y="110.20" width="4.2" height="3" fill="#4b4bfd"/>
<rect x="556.45" y="422.40" width="4.4" height="3.2" rx="1.3" fill="#4b4bfd"/>
<rect x="556.55" y="424.00" width="4.2" height="3" fill="#4b4bfd"/>
<rect x="570.58" y="108.60" width="4.4" height="3.2" rx="1.3" fill="#4b4bfd"/>
<rect x="570.68" y="110.20" width="4.2" height="3" fill="#4b4bfd"/>
<rect x="570.58" y="416.80" width="4.4" height="3.2" rx="1.3" fill="#4b4bfd"/>
<rect x="570.68" y="418.40" width="4.2" height="3" fill="#4b4bfd"/>
<rect x="584.72" y="108.60" width="4.4" height="3.2" rx="1.3" fill="#4b4bfd"/>
<rect x="584.82" y="110.20" width="4.2" height="3" fill="#4b4bfd"/>
<rect x="584.72" y="411.00" width="4.4" height="3.2" rx="1.3" fill="#4b4bfd"/>
<rect x="584.82" y="412.60" width="4.2" height="3" fill="#4b4bfd"/>
<rect x="598.86" y="108.60" width="4.4" height="3.2" rx="1.3" fill="#4b4bfd"/>
<rect x="598.96" y="110.20" width="4.2" height="3" fill="#4b4bfd"/>
<rect x="598.86" y="405.30" width="4.4" height="3.2" rx="1.3" fill="#4b4bfd"/>
<rect x="598.96" y="406.90" width="4.2" height="3" fill="#4b4bfd"/>
<rect x="613.00" y="108.60" width="4.4" height="3.2" rx="1.3" fill="#4b4bfd"/>
<rect x="613.10" y="110.20" width="4.2" height="3" fill="#4b4bfd"/>
<rect x="613.00" y="398.90" width="4.4" height="3.2" rx="1.3" fill="#4b4bfd"/>
<rect x="613.10" y="400.50" width="4.2" height="3" fill="#4b4bfd"/>
<rect x="627.13" y="108.60" width="4.4" height="3.2" rx="1.3" fill="#4b4bfd"/>
<rect x="627.23" y="110.20" width="4.2" height="3" fill="#4b4bfd"/>
<rect x="627.13" y="398.90" width="4.4" height="3.2" rx="1.3" fill="#4b4bfd"/>
<rect x="627.23" y="400.50" width="4.2" height="3" fill="#4b4bfd"/>
<rect x="641.27" y="108.60" width="4.4" height="3.2" rx="1.3" fill="#4b4bfd"/>
<rect x="641.37" y="110.20" width="4.2" height="3" fill="#4b4bfd"/>
<rect x="641.27" y="393.40" width="4.4" height="3.2" rx="1.3" fill="#4b4bfd"/>
<rect x="641.37" y="395.00" width="4.2" height="3" fill="#4b4bfd"/>
<rect x="655.41" y="108.60" width="4.4" height="3.2" rx="1.3" fill="#4b4bfd"/>
<rect x="655.51" y="110.20" width="4.2" height="3" fill="#4b4bfd"/>
<rect x="655.41" y="393.40" width="4.4" height="3.2" rx="1.3" fill="#4b4bfd"/>
<rect x="655.51" y="395.00" width="4.2" height="3" fill="#4b4bfd"/>
<rect x="114.20" y="109.80" width="551.34" height="557.70" fill="none" stroke="#4848b0" stroke-width="0.8"/>
<rect x="111.7" y="107.3" width="5" height="5" fill="#fff" stroke="#3c3c9c" stroke-width="1"/>
<rect x="387.4" y="107.3" width="5" height="5" fill="#fff" stroke="#3c3c9c" stroke-width="1"/>
<rect x="663.0" y="107.3" width="5" height="5" fill="#fff" stroke="#3c3c9c" stroke-width="1"/>
<rect x="111.7" y="386.2" width="5" height="5" fill="#fff" stroke="#3c3c9c" stroke-width="1"/>
<rect x="663.0" y="386.2" width="5" height="5" fill="#fff" stroke="#3c3c9c" stroke-width="1"/>
<rect x="111.7" y="665.0" width="5" height="5" fill="#fff" stroke="#3c3c9c" stroke-width="1"/>
<rect x="387.4" y="665.0" width="5" height="5" fill="#fff" stroke="#3c3c9c" stroke-width="1"/>
<rect x="663.0" y="665.0" width="5" height="5" fill="#fff" stroke="#3c3c9c" stroke-width="1"/>
</svg>



<div class="menu" style="left:93px">File</div>
<div class="menu" style="left:126px">Edit</div>
<div class="menu" style="left:161px">Object</div>
<div class="menu" style="left:211px">Type</div>
<div class="menu" style="left:251px">Select</div>
<div class="menu" style="left:297px">Effect</div>
<div class="menu" style="left:342px">View</div>
<div class="menu" style="left:381px">Window</div>
<div class="menu" style="left:438px">Help</div>

<!-- status bar fields -->
<div class="fld" style="left:51px;width:49px">40.4%</div>
<div class="dd" style="left:100px"></div>
<div class="fld" style="left:122px;width:52px">0°</div>
<div class="dd" style="left:174px"></div>
<div class="a" style="left:190px;top:789px;width:43px;height:15px;background:#575757"></div>
<div class="fld" style="left:233px;width:40px">1</div>
<div class="dd" style="left:273px"></div>
<div class="a" style="left:290px;top:789px;width:43px;height:15px;background:#575757"></div>
<div class="a" style="left:333px;top:789px;width:199px;height:15px;background:#535353;color:#e0e0e0;font-size:10px;line-height:15px;text-align:center">Selection</div>
<div class="a" style="left:533px;top:789px;width:32px;height:15px;background:#535353"></div>

<!-- layers panel -->
<div class="a" id="panel"></div>
<div class="a" id="phead"></div>
<div class="a" id="ptabbar"></div>
<div class="a" id="ptab"></div>
<div class="a" id="ptabtxt">Layers</div>
<div class="a" id="search"></div>
<div class="a" id="searchtxt">Search All</div>
<div class="a" id="list"></div>
<div class="row" style="top:516px"></div>
<div class="row" style="top:537px"></div>
<div class="row" style="top:558px"></div>
<div class="row" style="top:579px;background:#4b607a"></div>
<div class="row" style="top:600px"></div>
<div class="row" style="top:621px"></div>
<div class="bar" style="top:518px;background:#e44fe4"></div>
<div class="bar" style="top:539px;background:#4fe4e4"></div>
<div class="bar" style="top:560px;background:#e44fe4"></div>
<div class="bar" style="top:581px;background:#4f4fe4"></div>
<div class="bar" style="top:602px;background:#000"></div>
<div class="bar" style="top:623px;background:#4f4fe4"></div>
<div class="lname" style="top:521px">Scale</div>
<div class="lname" style="top:542px">Color 03</div>
<div class="lname" style="top:563px">Color 02</div>
<div class="lname" style="top:584px">Color 01</div>
<div class="lname" style="top:605px">Grid</div>
<div class="lname" style="top:626px">Image</div>


<svg width="1324" height="809" viewBox="0 0 1324 809" style="pointer-events:none">
<!-- top bar -->
<rect x="14" y="10" width="16" height="15" rx="2.5" fill="#330000"/>
<text x="22" y="20.8" font-family="Liberation Sans" font-weight="bold" font-size="8.5" fill="#ffa646" text-anchor="middle">Ai</text>
<path d="M53 9.5 L62 17.5 Q62.5 18.5 61 18.5 L59.5 18.5 L59.5 24.5 Q59.5 25 59 25 L55 25 L55 20.5 L51 20.5 L51 25 L47 25 Q46.5 25 46.5 24.5 L46.5 18.5 L45 18.5 Q43.5 18.5 44 17.5 Z" fill="#d4d4d4"/>
<line x1="78.5" y1="8" x2="78.5" y2="27" stroke="#4a4a4a" stroke-width="1"/>
<line x1="476.5" y1="8" x2="476.5" y2="27" stroke="#4a4a4a" stroke-width="1"/>
<rect x="1056" y="4.5" width="50.5" height="24.5" rx="12.25" fill="#1577ea"/>
<text x="1081" y="21.6" font-family="Liberation Sans" font-weight="bold" font-size="12.5" fill="#ffffff" text-anchor="middle" letter-spacing="-0.3">Share</text>
<circle cx="1123.3" cy="15" r="5.4" fill="none" stroke="#d6d6d6" stroke-width="2"/>
<line x1="1127.2" y1="19" x2="1132" y2="24" stroke="#d6d6d6" stroke-width="2.2" stroke-linecap="round"/>
<line x1="1148" y1="7" x2="1148" y2="29" stroke="#4a4a4a" stroke-width="1"/>
<rect x="1168.5" y="12" width="8.5" height="11.7" fill="#cfcfcf"/>
<rect x="1178" y="12" width="8" height="5.5" fill="#cfcfcf"/>
<rect x="1178" y="18.5" width="8" height="5.2" fill="#cfcfcf"/>
<rect x="1204.6" y="11.2" width="15" height="12.5" fill="none" stroke="#d0d0d0" stroke-width="1.3"/>
<rect x="1206.5" y="13.5" width="2.2" height="2" fill="#d0d0d0"/>
<rect x="1206.5" y="16.5" width="2.2" height="2" fill="#d0d0d0"/>
<rect x="1206.5" y="19.5" width="2.2" height="2" fill="#d0d0d0"/>
<line x1="1209.5" y1="11" x2="1209.5" y2="24" stroke="#888" stroke-width="0.8"/>
<path d="M1233 0 V19.5 H1316 V0 M1261 0 V19.5 M1289 0 V19.5" fill="none" stroke="#5b5b5b" stroke-width="1"/>
<rect x="1242" y="12" width="10.5" height="2.6" fill="#c8c8c8"/>
<rect x="1270.8" y="7.8" width="9" height="6.3" fill="none" stroke="#c8c8c8" stroke-width="1.8"/>
<path d="M1297.5 6 L1308.5 14 M1308.5 6 L1297.5 14" stroke="#c8c8c8" stroke-width="2.4"/>
<line x1="0" y1="34.3" x2="1324" y2="34.3" stroke="#3a3a3a" stroke-width="1.4"/>
<!-- tab close -->
<!-- toolbar header -->
<path d="M10 39 L13 41.5 L10 44 Z M14 39 L17 41.5 L14 44 Z" fill="#dcdcdc"/>
<g stroke="#3a3a3a" stroke-width="1">
<line x1="14.5" y1="50" x2="14.5" y2="54"/><line x1="16.5" y1="50" x2="16.5" y2="54"/><line x1="18.5" y1="50" x2="18.5" y2="54"/><line x1="20.5" y1="50" x2="20.5" y2="54"/><line x1="22.5" y1="50" x2="22.5" y2="54"/><line x1="24.5" y1="50" x2="24.5" y2="54"/><line x1="26.5" y1="50" x2="26.5" y2="54"/><line x1="28.5" y1="50" x2="28.5" y2="54"/><line x1="30.5" y1="50" x2="30.5" y2="54"/><line x1="32.5" y1="50" x2="32.5" y2="54"/>
</g>
<g fill="none" stroke="#d2d2d2" stroke-width="1.5" stroke-linejoin="round">
<!-- 1 selection outline arrow -->
<path d="M20 71 L31 81 L25 81.5 L20.5 86 Z"/>
</g>
<g fill="#d2d2d2">
<!-- 2 direct selection filled -->
<path d="M19.5 94 L32 104.5 L25.5 105 L20 111 Z"/>
<path d="M33 111 L36 108 L36 111 Z"/>
<!-- pen -->
<g transform="translate(24.5,126) rotate(45)"><rect x="-3" y="-10" width="6" height="3.2" rx="0.5"/><path d="M-4.2 -6 H4.2 Q5.6 0.5 1.2 9.5 H-1.2 Q-5.6 0.5 -4.2 -6 Z"/><rect x="-0.5" y="1.5" width="1" height="8" fill="#535353"/><circle cx="0" cy="1.5" r="1" fill="#535353"/></g>
<path d="M33 135 L36 132 L36 135 Z"/>
<!-- curvature -->
<g transform="translate(26,149.5) rotate(45) scale(0.9)"><rect x="-3" y="-10" width="6" height="3.2" rx="0.5"/><path d="M-4.2 -6 H4.2 Q5.6 0.5 1.2 9.5 H-1.2 Q-5.6 0.5 -4.2 -6 Z"/><rect x="-0.5" y="1.5" width="1" height="8" fill="#535353"/><circle cx="0" cy="1.5" r="1" fill="#535353"/></g>
<path d="M15 142.5 Q17.5 146 15.5 150 Q13.5 155 17.5 156.5 Q19 156.5 20 155" fill="none" stroke="#d2d2d2" stroke-width="1.2"/>
<!-- rectangle -->
<path d="M33 183 L36 180 L36 183 Z"/>
<!-- brush -->
<path d="M31 190 L32.5 191.5 L25 200 L23.5 198.5 Z"/>
<path d="M23 199 L24.5 200.5 Q23 205 17 206 Q18 201 23 199 Z"/>
<path d="M33 207 L36 204 L36 207 Z"/>
<!-- type T -->
<path d="M17 214.5 H31 V219 H30 Q29.5 216.5 27 216.3 H25.3 V227 L27 228 V229 H21 V228 L22.7 227 V216.3 H21 Q18.5 216.5 18 219 H17 Z"/>
<path d="M33 231 L36 228 L36 231 Z"/>
<!-- rotate -->
<path d="M33 255 L36 252 L36 255 Z"/>
<!-- eraser -->
<path d="M26 261.5 L32.5 268 L24.5 276 L18 269.5 Z"/>
<path d="M33 279 L36 276 L36 279 Z"/>
<!-- gradient -->
<path d="M33 327 L36 324 L36 327 Z"/>
<!-- zoom -->
<path d="M33 471 L36 468 L36 471 Z"/>
</g>
<!-- rectangle tool -->
<rect x="16.5" y="167" width="15.5" height="14.5" fill="#5c5c5c" stroke="#d2d2d2" stroke-width="1.3"/>
<!-- rotate tool -->
<path d="M19.5 240.5 A6.8 6.8 0 0 1 31 247.5" fill="none" stroke="#d2d2d2" stroke-width="2.4"/>
<path d="M30.5 249.5 A6.8 6.8 0 0 1 17.5 251" fill="none" stroke="#d2d2d2" stroke-width="1.6" stroke-dasharray="1.3 1.3"/>
<path d="M15.5 239 L22 238 L20 244 Z" fill="#d2d2d2"/>
<!-- eraser band -->
<path d="M18 269.5 L21.5 273 L19.5 275 L16 271.5 Z" fill="#5c5c5c" stroke="#d2d2d2" stroke-width="1"/>
<!-- shape builder -->
<ellipse cx="22.5" cy="292.5" rx="6.5" ry="5.5" fill="none" stroke="#d2d2d2" stroke-width="1.3"/>
<line x1="16" y1="292.5" x2="29" y2="292.5" stroke="#d2d2d2" stroke-width="1"/>
<line x1="22.5" y1="287" x2="22.5" y2="298" stroke="#d2d2d2" stroke-width="1"/>
<path d="M27 290 L34 298 L30 298.5 L28 303 Z" fill="#d2d2d2"/>
<!-- gradient tool -->
<defs><linearGradient id="gr1" x1="0" y1="0" x2="1" y2="0"><stop offset="0" stop-color="#1c1c1c"/><stop offset="1" stop-color="#dcdcdc"/></linearGradient>
<linearGradient id="gr2" x1="0" y1="0" x2="1" y2="0"><stop offset="0" stop-color="#fff"/><stop offset="1" stop-color="#222"/></linearGradient></defs>
<rect x="16.5" y="311" width="15.5" height="14.5" fill="url(#gr1)" stroke="#d2d2d2" stroke-width="1.2"/>
<!-- width tool -->
<g stroke="#d2d2d2" fill="none" stroke-linecap="round">
<path d="M18.5 345.5 L30 336.5" stroke-width="2.6"/>
<path d="M16 344 L20 348 M28 334.5 L32 338.5" stroke-width="1.5"/>
<path d="M20.5 340.5 L23 338.5" stroke-width="1.3"/>
</g>
<!-- eyedropper -->
<g transform="translate(24,366) rotate(45)">
<rect x="-2" y="-3" width="4" height="12" rx="2" fill="none" stroke="#d2d2d2" stroke-width="1.3"/>
<rect x="-3" y="-10" width="6" height="8" rx="2.5" fill="#d2d2d2"/>
</g>
<!-- puppet warp -->
<path d="M18 385 Q21 383 22.5 386 Q23 389 26 388 Q28 385 27 384 L29 383.5 Q29.5 386 28.5 388 Q32 388 33.5 392 Q34 395 32 394 Q30 391 27.5 392 Q26 396 22 396 Q20 396 19.5 398 L17 398 Q17 395 20 393 Q21 391 20 389 Q19 387 18 387 Z" fill="#d2d2d2"/>
<circle cx="21" cy="392" r="1" fill="#535353"/>
<!-- symbol sprayer (shapes) -->
<rect x="15.5" y="406" width="7" height="7" fill="#c8c8c8"/>
<circle cx="24" cy="413" r="4" fill="#777" stroke="#d2d2d2" stroke-width="1.2"/>
<circle cx="29" cy="417" r="3.5" fill="#5c5c5c" stroke="#d2d2d2" stroke-width="1.2"/>
<!-- artboard tool -->
<path d="M19.5 428 V445.5 M13 433.5 H30" stroke="#d2d2d2" stroke-width="1.1"/>
<path d="M20 434 H27 L30.5 437.5 V444.5 H20 Z" fill="#777" stroke="#d2d2d2" stroke-width="1.2"/>
<!-- zoom tool -->
<circle cx="22.5" cy="460" r="5.5" fill="none" stroke="#d2d2d2" stroke-width="1.6"/>
<line x1="26.5" y1="464" x2="31.5" y2="469" stroke="#d2d2d2" stroke-width="2"/>
<!-- default fill stroke -->
<rect x="12.5" y="484" width="8" height="8" fill="#000" stroke="#eee" stroke-width="1"/>
<rect x="9.5" y="481" width="8" height="8" fill="#fff" stroke="#111" stroke-width="1.2"/>
<!-- swap arrows -->
<path d="M31 484 Q38 484 38 491" fill="none" stroke="#d2d2d2" stroke-width="1.5"/>
<path d="M29 484 L32 481 L32 487 Z M38 493 L35 490 L41 490 Z" fill="#d2d2d2"/>
<!-- stroke swatch -->
<rect x="21" y="509" width="17" height="18" fill="#e0e0e0"/>
<rect x="24.5" y="512.5" width="10" height="11" fill="#3c3c3c" stroke="#bdbdbd" stroke-width="1"/>
<rect x="20.5" y="508.5" width="18" height="19" fill="none" stroke="#fff" stroke-width="1"/>
<!-- fill swatch -->
<rect x="10" y="499.5" width="18" height="18" fill="#8a9b3a" stroke="#f4f4da" stroke-width="1.2"/>
<!-- small swatches -->
<rect x="10.5" y="536" width="8.5" height="8" fill="#8a9b3a" stroke="#222" stroke-width="0.6"/>
<rect x="19.5" y="536" width="9" height="8" fill="url(#gr2)"/>
<rect x="29" y="536" width="8.5" height="8" fill="#fff"/>
<line x1="29" y1="544" x2="37.5" y2="536" stroke="#e01010" stroke-width="1.6"/>
<!-- draw mode -->
<circle cx="23" cy="558" r="4" fill="none" stroke="#d2d2d2" stroke-width="1.3"/>
<rect x="23" y="559" width="6" height="6" fill="#c0c0c0"/>
<!-- screen mode -->
<rect x="21" y="577" width="12" height="9" fill="#6a6a6a" stroke="#d2d2d2" stroke-width="1.2"/>
<rect x="15.5" y="581.5" width="12" height="9" fill="#555" stroke="#d2d2d2" stroke-width="1.2"/>
<!-- more -->
<circle cx="18.5" cy="616" r="1.5" fill="#c8c8c8"/><circle cx="24" cy="616" r="1.5" fill="#c8c8c8"/><circle cx="29.5" cy="616" r="1.5" fill="#c8c8c8"/>
<!-- tab close x -->
<path d="M280 45.5 L286 51.5 M286 45.5 L280 51.5" stroke="#e8e8e8" stroke-width="2"/>
<!-- vscroll arrows -->
<path d="M1307.5 74.5 L1311 71 L1314.5 74.5" fill="none" stroke="#cfcfcf" stroke-width="1.3"/>
<path d="M1307.5 777.5 L1311 781 L1314.5 777.5" fill="none" stroke="#cfcfcf" stroke-width="1.3"/>
<path d="M1292.5 792.5 L1295.5 795.5 L1292.5 798.5" fill="none" stroke="#cfcfcf" stroke-width="1.3"/>
<!-- status bar arrows -->
<g fill="none" stroke="#e0e0e0" stroke-width="1.4">
<path d="M105 796 L108 799 L111 796"/><path d="M179 796 L182 799 L185 796"/><path d="M278.5 796 L281.5 799 L284.5 796"/>
</g>
<g fill="#6b6b6b">
<rect x="200" y="792" width="1.5" height="9"/><path d="M209 792 L203 796.5 L209 801 Z"/><path d="M222 792 L216 796.5 L222 801 Z"/>
<path d="M302 792 L308 796.5 L302 801 Z"/><path d="M315 792 L321 796.5 L315 801 Z"/><rect x="322" y="792" width="1.5" height="9"/>
</g>
<path d="M539 792 L546 797 L539 802 Z" fill="#e0e0e0"/>
<path d="M561 793 L557.5 796.5 L561 800" fill="none" stroke="#bdbdbd" stroke-width="1.3"/>
<!-- layers panel header icons -->
<path d="M1121 438 L1118.5 440.5 L1121 443 M1125 438 L1122.5 440.5 L1125 443" fill="none" stroke="#d0d0d0" stroke-width="1.2"/>
<path d="M1137.5 437.5 L1143 443 M1143 437.5 L1137.5 443" stroke="#d0d0d0" stroke-width="1.8"/>
<path d="M1133 456.5 H1143 M1133 460.5 H1143 M1133 464.5 H1143" stroke="#d0d0d0" stroke-width="1"/>
<rect x="927.5" y="481.5" width="216" height="30" fill="none" stroke="#5c5c5c" stroke-width="1"/>
<line x1="1117.5" y1="482" x2="1117.5" y2="511" stroke="#5a5a5a" stroke-width="1"/>
<!-- search icon -->
<circle cx="941" cy="494" r="4" fill="none" stroke="#d0d0d0" stroke-width="1.6"/>
<line x1="944" y1="497" x2="948" y2="501" stroke="#d0d0d0" stroke-width="2"/>
<!-- filter -->
<path d="M1124.5 489 H1138.5 L1133 496 V504 L1130 502 V496 Z" fill="#d0d0d0"/>
<!-- eye -->
<path d="M928.5 589.5 Q934.5 583 940.5 589.5 Q934.5 596 928.5 589.5 Z" fill="#c8c8c8"/>
<circle cx="934.5" cy="589.5" r="2" fill="#4b607a"/>
<!-- lock -->
<rect x="952" y="631" width="8" height="6" fill="#c8c8c8"/>
<path d="M953.5 631 V629 A2.5 2.5 0 0 1 958.5 629 V631" fill="none" stroke="#c8c8c8" stroke-width="1.3"/>
<!-- chevrons -->
<g fill="none" stroke="#e0e0e0" stroke-width="1.4">
<path d="M979.5 523 L983 526.5 L979.5 530"/>
<path d="M979.5 544 L983 547.5 L979.5 551"/>
<path d="M979.5 565 L983 568.5 L979.5 572"/>
<path d="M979.5 586 L983 589.5 L979.5 593"/>
<path d="M979.5 607 L983 610.5 L979.5 614"/>
<path d="M979.5 628 L983 631.5 L979.5 635"/>
</g>

<!-- thumbnails -->
<g stroke="#111" stroke-width="1">
<rect x="997.5" y="518.5" width="17" height="17" fill="#fdfdfd"/>
<rect x="997.5" y="539.5" width="17" height="17" fill="#9eae9e"/>
<rect x="997.5" y="560.5" width="17" height="17" fill="#d98fa0"/>
<rect x="997.5" y="581.5" width="17" height="17" fill="#b7b98f"/>
<rect x="997.5" y="602.5" width="17" height="17" fill="#eee4e8"/>
<rect x="997.5" y="623.5" width="17" height="17" fill="#c9baa2"/>
</g>
<ellipse cx="1005" cy="548" rx="4" ry="5.5" fill="#e6ecd0"/><ellipse cx="1005" cy="548" rx="2" ry="3.5" fill="#c8d890"/>
<ellipse cx="1006" cy="569" rx="4.5" ry="5" fill="#f4e0e4"/><ellipse cx="1006" cy="569" rx="2.5" ry="2.5" fill="#e8a8b4"/>
<ellipse cx="1006" cy="590" rx="5" ry="5" fill="#e8c4c8"/><ellipse cx="1006" cy="590" rx="3" ry="2" fill="#f4f0f0"/>
<ellipse cx="1006" cy="611" rx="5" ry="5.5" fill="#e090a8"/><ellipse cx="1007" cy="609" rx="2.5" ry="2" fill="#f4e8ec"/>
<path d="M1000 627 Q1004 631 1002 636 M1004 626 Q1009 630 1006 634 Q1010 636 1012 632 M1008 628 L1012 638" fill="none" stroke="#3c2c1c" stroke-width="1.1"/>
<!-- target circles -->
<g fill="none" stroke="#d0d0d0" stroke-width="1.1">
<circle cx="1118" cy="527" r="3.3"/><circle cx="1118" cy="548" r="3.3"/><circle cx="1118" cy="569" r="3.3"/><circle cx="1118" cy="590" r="3.3"/><circle cx="1118" cy="611" r="3.3"/><circle cx="1118" cy="632" r="3.3"/>
</g>
<path d="M1108.5 516V579M1108.5 600V642" stroke="#4b4b4b" stroke-width="1"/>
<path d="M945.5 516V579M945.5 600V642" stroke="#4b4b4b" stroke-width="1"/>
<path d="M964.5 516V579M964.5 600V642" stroke="#4b4b4b" stroke-width="1"/>
<rect x="1127.5" y="587" width="6" height="6" fill="#4b4be6" stroke="#111" stroke-width="1"/>
<path d="M1137 580 L1143 580 L1143 586 Z" fill="#e0e0e0"/>
<!-- panel bottom icons -->
<text x="923" y="708" font-family="Liberation Sans" font-size="11" font-weight="bold" fill="#d0d0d0">6</text>
<circle cx="932.5" cy="705.5" r="1" fill="#d0d0d0"/><circle cx="936" cy="705.5" r="1" fill="#d0d0d0"/><circle cx="939.5" cy="705.5" r="1" fill="#d0d0d0"/>
<g fill="none" stroke="#d0d0d0" stroke-width="1.1">
<path d="M957.5 700 V709.5 H962 M957 700.5 H967.5 V703"/>
<path d="M980.5 703 V711.5 H991.5 V706 M980.5 703.5 H985.5"/>
<path d="M985.5 706.5 L992 700 M988.5 699.5 H992.5 V703.5" stroke-width="1.3"/>
<circle cx="1010.5" cy="702.5" r="4"/><path d="M1013.5 705.5 L1017 709"/>
<rect x="1032.5" y="699.5" width="8" height="8"/><rect x="1036.5" y="703.5" width="7" height="7"/>
<rect x="1062.5" y="700.5" width="9" height="9"/><path d="M1067 702.5 V707.5 M1064.5 705 H1069.5 M1056.5 699 V704.5 H1061"/><path d="M1059.5 702.5 L1062 704.5 L1059.5 706.5" />
<rect x="1085.5" y="699.5" width="10" height="10"/><path d="M1090.5 701.5 V707.5 M1087.5 704.5 H1093.5"/>
<path d="M1110.5 701.5 H1122.5 M1114 701 V699.5 H1119 V701 M1111.5 701.5 L1112.5 710.5 H1120.5 L1121.5 701.5 M1114.5 703.5 V709 M1116.5 703.5 V709 M1118.5 703.5 V709"/>
</g>
<path d="M964 704 H969 V711.5 L966.5 709.5 L964 711.5 Z" fill="#d0d0d0"/><circle cx="957.5" cy="700.5" r="1.2" fill="#d0d0d0"/><circle cx="967.5" cy="700.5" r="1.2" fill="#d0d0d0"/><circle cx="957.5" cy="709.5" r="1.2" fill="#d0d0d0"/>
<rect x="1037" y="704" width="6" height="6" fill="#999"/>
<line x1="919" y1="714.5" x2="1149" y2="714.5" stroke="#3a3a3a" stroke-width="1.5"/>
<g stroke="#333" stroke-width="1">
<path d="M1024.5 717 V721 M1026.5 717 V721 M1028.5 717 V721 M1030.5 717 V721 M1032.5 717 V721 M1034.5 717 V721 M1036.5 717 V721 M1038.5 717 V721 M1040.5 717 V721 M1042.5 717 V721"/>
</g>
</svg>
</body></html>
